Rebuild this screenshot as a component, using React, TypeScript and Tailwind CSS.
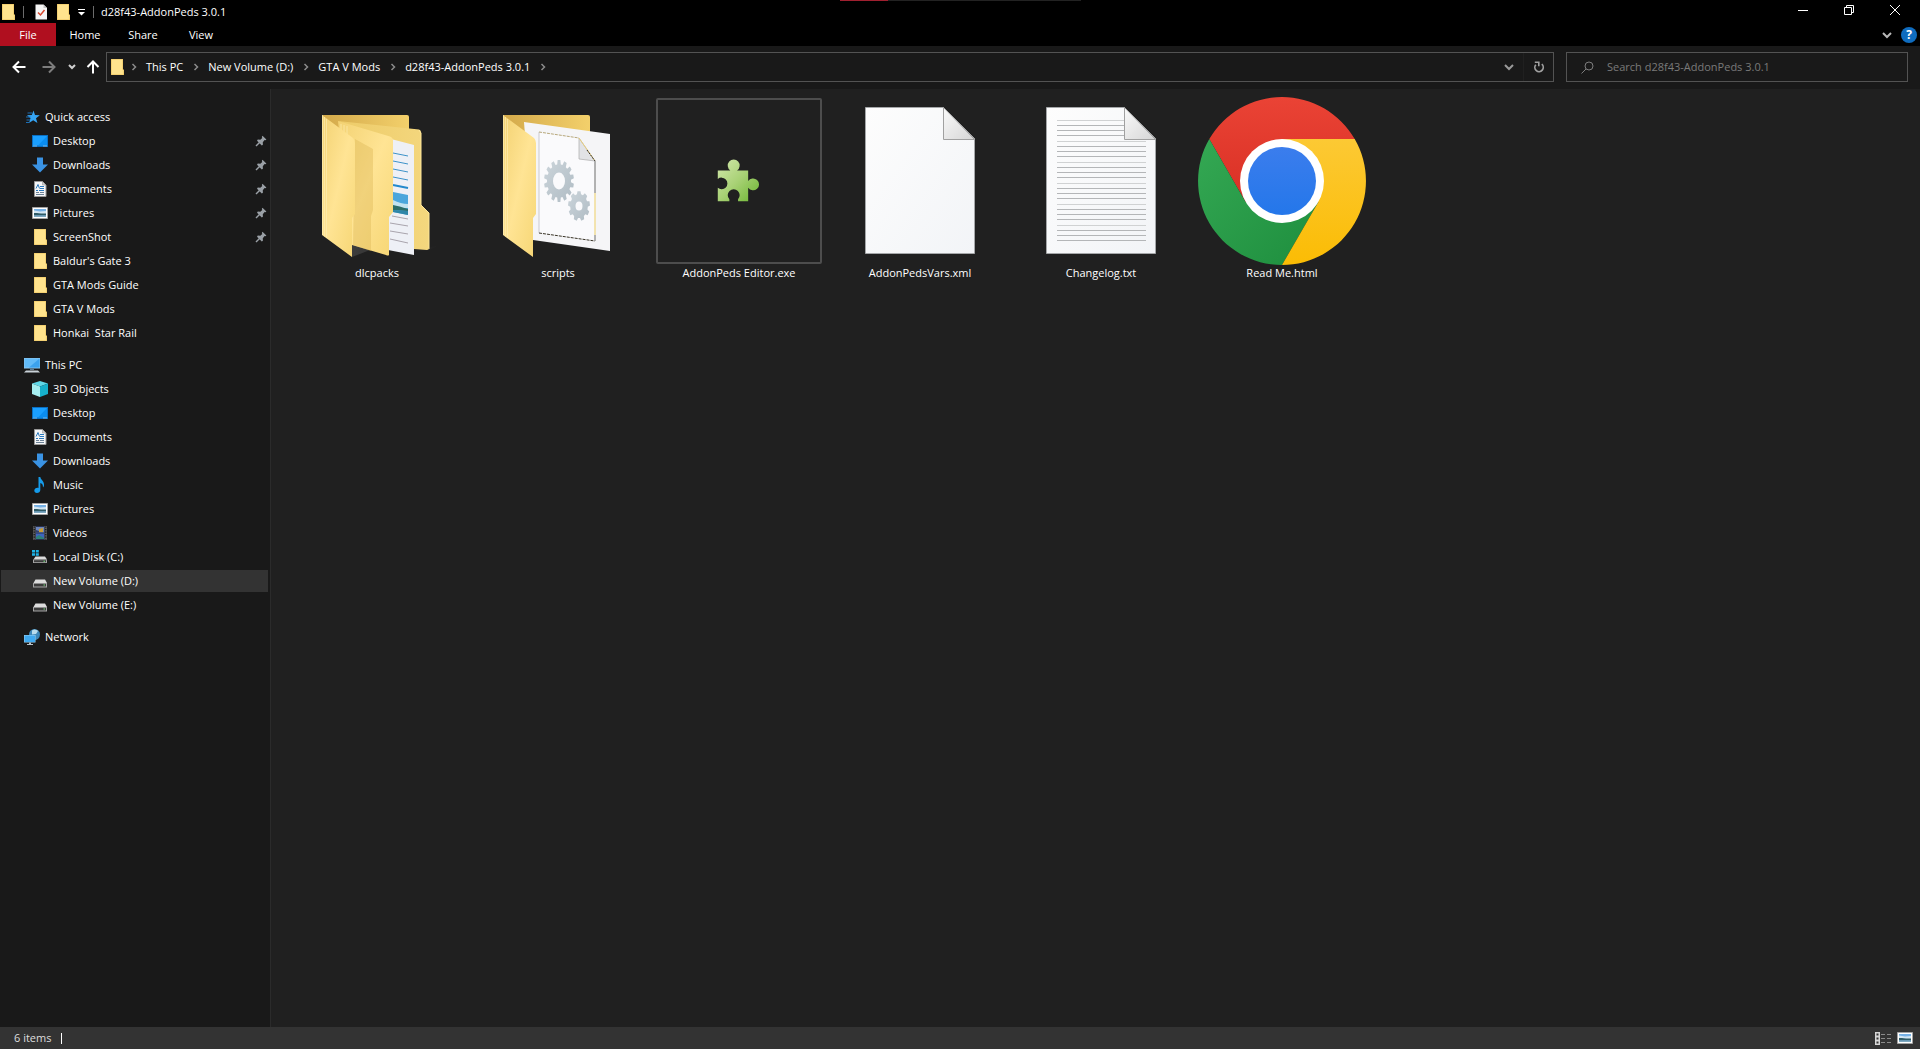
import { useState } from "react"
import type { ReactNode } from "react"
import { clsx } from "clsx"

type IconName =
    | "star" | "desktop" | "downloads" | "documents" | "pictures" | "folder"
    | "pc" | "cube" | "music" | "videos" | "diskC" | "disk" | "network"

interface TreeItem {
    label: string
    icon: IconName
    pinned?: boolean
}

interface TreeGroup {
    root: TreeItem
    items: TreeItem[]
}

const TREE: TreeGroup[] = [
    {
        root: { label: "Quick access", icon: "star" },
        items: [
            { label: "Desktop", icon: "desktop", pinned: true },
            { label: "Downloads", icon: "downloads", pinned: true },
            { label: "Documents", icon: "documents", pinned: true },
            { label: "Pictures", icon: "pictures", pinned: true },
            { label: "ScreenShot", icon: "folder", pinned: true },
            { label: "Baldur's Gate 3", icon: "folder" },
            { label: "GTA Mods Guide", icon: "folder" },
            { label: "GTA V Mods", icon: "folder" },
            { label: "Honkai  Star Rail", icon: "folder" },
        ],
    },
    {
        root: { label: "This PC", icon: "pc" },
        items: [
            { label: "3D Objects", icon: "cube" },
            { label: "Desktop", icon: "desktop" },
            { label: "Documents", icon: "documents" },
            { label: "Downloads", icon: "downloads" },
            { label: "Music", icon: "music" },
            { label: "Pictures", icon: "pictures" },
            { label: "Videos", icon: "videos" },
            { label: "Local Disk (C:)", icon: "diskC" },
            { label: "New Volume (D:)", icon: "disk" },
            { label: "New Volume (E:)", icon: "disk" },
        ],
    },
    { root: { label: "Network", icon: "network" }, items: [] },
]

const CRUMBS = ["This PC", "New Volume (D:)", "GTA V Mods", "d28f43-AddonPeds 3.0.1"]

/* ---------- small icons, 16x16 ---------- */

const SMALL_ICONS: Record<IconName, ReactNode> = {
    star: (
        <>
            <path d="M9.5 1.5L11 6l4.8.3L12 9.2l1.4 4.8-4.2-2.8L5 14l1.500-4.800L3 6.300 7.800 6z" fill="#35a5f5" />
            <path d="M3.5 4H8M2 8h4.5M2.5 11H6M2 13.5h3" stroke="#1c6fb5" strokeWidth="1" />
        </>
    ),
    desktop: (
        <>
            <path d="M0 2h16v12H0z" fill="#0a6fc2" />
            <path d="M1 3h14v9.5H1z" fill="#1a9fff" />
            <path d="M15 3v9.5H6z" fill="#0a8df0" />
            <path d="M1.5 13h1M3.5 13h1M11.5 13h1M13.5 13h1" stroke="#d7efff" strokeWidth="1" />
        </>
    ),
    downloads: <path d="M5 .5h6v7h5l-8 8-8-8h5z" fill="#3a93e4" />,
    documents: (
        <>
            <path d="M2.5.5h8L14 4v11.5H2.5z" fill="#f4f6f8" stroke="#9a9a9a" strokeWidth="1" />
            <path d="M10.5.5V4H14z" fill="#cfcfcf" stroke="#8a8a8a" strokeWidth=".5" />
            <path d="M4 7.5l2-4 1.500 4M4 9.500h2M8 5.500h4M8 7.500h4M7 9.500h5" stroke="#2a79bd" strokeWidth="1" fill="none" />
            <path d="M4 11.5h3M8 11.5h4M4 13.5h8" stroke="#6c8196" strokeWidth="1" />
        </>
    ),
    pictures: (
        <>
            <path d="M.5 2.5h15v11H.5z" fill="#fff" stroke="#a3a3a3" strokeWidth="1" />
            <path d="M2 4h12v8H2z" fill="#76b1e6" />
            <path d="M2 5.500l6 1 6-.5v3H2z" fill="#d3e6f3" />
            <path d="M2 8c3-.5 6 1 12 .5v2H2z" fill="#2f5b66" />
            <path d="M2 10.500h12V12H2z" fill="#7fa9c0" />
        </>
    ),
    folder: (
        <>
            <path d="M2 0h12v10l1 1v5H2z" fill="#e9c05a" />
            <path d="M2.5.5h11v15h-11z" fill="#ffe38d" />
            <path d="M13 10.5l1.5.5v4.5H13z" fill="#fbe08a" />
        </>
    ),
    pc: (
        <>
            <path d="M0 1h16v10.5H0z" fill="#8fc8ee" />
            <path d="M.5 1.5h15v9H.5z" fill="#62bbf8" />
            <path d="M15.5 1.5v9H5z" fill="#3ba2ee" />
            <path d="M6 11.5h4V13H6z" fill="#5d7d94" />
            <path d="M2 13.5h12l2 2H0z" fill="#c9d2d8" />
        </>
    ),
    cube: (
        <>
            <path d="M8 0l8 2.5-8 3-8-3z" fill="#5fd8e8" />
            <path d="M0 2.5l8 3V16l-8-3z" fill="#a5eef0" />
            <path d="M16 2.5l-8 3V16l8-3z" fill="#16b0cb" />
        </>
    ),
    music: <path d="M6.500 0h1.800c.3 3 4.500 4 3.700 9l-1 1.500c0-3-1-4-2.700-4.500V13c0 2-1.600 3-3.300 3S2.300 15 2.300 13.600c0-2 2.200-3.200 4.200-2.600z" fill="#159bea" />,
    videos: (
        <>
            <path d="M1 1h14v14H1z" fill="#5a5a5a" />
            <path d="M3.5 1h9v14h-9z" fill="#26304f" />
            <path d="M4 2h8v5.5H4z" fill="#6d86bd" />
            <path d="M4 8.5h8V14H4z" fill="#3f65c0" />
            <path d="M7 4l4-1v4H7z" fill="#c89d35" />
            <path d="M4 5l3 1v1.500H4z" fill="#34406b" />
            <path d="M4 12l3-2 5 3v1H4z" fill="#2f8177" />
            <path d="M2.2 1.5v13M13.8 1.5v13" stroke="#111" strokeWidth="1.2" strokeDasharray="1.2 1.3" />
        </>
    ),
    diskC: (
        <>
            <path d="M0 1h3v2.5H0zM3.8 1h3v2.5h-3zM0 4.3h3v2.5H0zM3.8 4.3h3v2.5h-3z" fill="#1fb4e8" />
            <path d="M3.5 7.500H13l2 3H1.500z" fill="#dcdcdc" />
            <path d="M1 10.5h14V14H1z" fill="#a5a5a5" />
            <path d="M2 11.2h12v2H2z" fill="#3c3c3c" />
            <path d="M11.5 11.7H13v1h-1.5z" fill="#74e07c" />
        </>
    ),
    disk: (
        <>
            <path d="M3.5 6.5H13l2 3.5H1.500z" fill="#dcdcdc" />
            <path d="M1 10h14v4.5H1z" fill="#a5a5a5" />
            <path d="M2 10.8h12v2.7H2z" fill="#3c3c3c" />
            <path d="M11.5 11.5H13v1h-1.5z" fill="#74e07c" />
        </>
    ),
    network: (
        <>
            <circle cx="10.5" cy="5.5" r="5.5" fill="#3d87b8" />
            <path d="M8 1.5c2-2 5-1 6 .5l-2 3-4 .5z" fill="#b8dcec" />
            <path d="M0 6h11.5v7.5H0z" fill="#9bd2f2" />
            <path d="M.5 6.5H11V13H.5z" fill="#3fa9f0" />
            <path d="M3 15h6v1H3zM5 13.500h2V15H5z" fill="#b7c2ca" />
        </>
    ),
}

function SmallIcon({ name }: { name: IconName }) {
    return (
        <svg viewBox="0 0 16 16" className="size-4 shrink-0" aria-hidden="true">
            {SMALL_ICONS[name]}
        </svg>
    )
}

function Pin() {
    return (
        <svg viewBox="0 0 12 12" className="size-3 shrink-0" aria-hidden="true">
            <path d="M7.5.8l3.900 3.700-1 .8-.8-.2-1.800 2.100.1 2.500-1.100.8L2 5.700l.8-1.100 2.500.2 2-1.800-.5-1z" fill="#9aa0a6" />
            <path d="M4.5 7.5L1 11" stroke="#9aa0a6" strokeWidth="1.4" />
        </svg>
    )
}

function Chevron({ dir, className }: { dir: "right" | "down"; className?: string }) {
    return (
        <svg viewBox="0 0 10 10" className={clsx("size-[10px] shrink-0", className)} aria-hidden="true">
            <path d={dir === "right" ? "M3.5 2l3 3-3 3" : "M1 3l4 4 4-4"} fill="none" stroke="currentColor" strokeWidth={dir === "right" ? 1.5 : 2} />
        </svg>
    )
}

function Arrow({ className }: { className?: string }) {
    return (
        <svg viewBox="0 0 14 14" className={clsx("size-[14px]", className)} aria-hidden="true">
            <path d="M7 1.5L1.5 7 7 12.5M1.5 7h12" fill="none" stroke="currentColor" strokeWidth="2" />
        </svg>
    )
}

/* ---------- large file icons, 168x168 ---------- */

function gearPath(cx: number, cy: number, rx: number, ry: number, teeth: number) {
    const points: string[] = []
    const step = (Math.PI * 2) / teeth
    for (let i = 0; i < teeth; i++) {
        const corners: [number, number][] = [[-0.34, 0.8], [-0.2, 1], [0.2, 1], [0.34, 0.8]]
        corners.forEach(([shift, r]) => {
            const a = (i + shift) * step - Math.PI / 2
            points.push(`${(cx + Math.cos(a) * rx * r).toFixed(2)} ${(cy + Math.sin(a) * ry * r).toFixed(2)}`)
        })
    }
    return `M${points.join("L")}Z`
}

function FolderDefs({ id }: { id: string }) {
    return (
        <defs>
            <linearGradient id={`${id}-flap`} x1="0" y1="0" x2="1" y2="1">
                <stop offset="0" stopColor="#f3d273" />
                <stop offset=".5" stopColor="#ffe494" />
                <stop offset="1" stopColor="#f6d675" />
            </linearGradient>
            <linearGradient id={`${id}-back`} x1="0" y1="0" x2="1" y2="0">
                <stop offset="0" stopColor="#d3a94a" />
                <stop offset="1" stopColor="#f3d06b" />
            </linearGradient>
            <linearGradient id={`${id}-inner`} x1="0" y1="0" x2="1" y2="0">
                <stop offset="0" stopColor="#edcb68" />
                <stop offset="1" stopColor="#f4d77e" />
            </linearGradient>
        </defs>
    )
}

function FolderFlap({ id }: { id: string }) {
    return (
        <>
            <path d="M29 18L60 41Q62 43 62 46V117L59 121V160L29 138Z" fill={`url(#${id}-flap)`} />
            <path d="M29.5 18V138M31.5 20V139.5M33.5 22V141" stroke="#fff0b8" strokeWidth=".6" />
        </>
    )
}

function DlcFolder() {
    return (
        <svg viewBox="0 0 168 168" className="size-full" aria-hidden="true">
            <FolderDefs id="dlc" />
            <linearGradient id="dlc-shade" x1="0" y1="0" x2="1" y2="0">
                <stop offset="0" stopColor="#3c3c3c" />
                <stop offset="1" stopColor="#202020" />
            </linearGradient>
            <path d="M59 160l18-7-18-6zM121 154l26-6-11 5z" fill="url(#dlc-shade)" />
            <path d="M29 18h85q2 0 2 2v40H60z" fill="url(#dlc-back)" />
            <path d="M45 24L126 32.5q2 .5 2 3V108l8 8v35q0 2-2 2l-13-1V60z" fill="url(#dlc-inner)" />
            <path d="M126 33l2 3v72l8 8v36" fill="none" stroke="#ffe79a" strokeWidth="1" />
            <path d="M98 42l23 6v110l-26-5z" fill="#eef0f6" />
            <path d="M100 56l15 3M100 64l15 3M100 72l15 3M100 80l15 3" stroke="#3f93c9" strokeWidth="1" />
            <path d="M100 88l15 3" stroke="#2389cc" strokeWidth="2" />
            <path d="M100 95l15 3v20l-15-3z" fill="#4ba6dc" />
            <path d="M100 103q8 4 15 4v4h-15z" fill="#c2e2ef" />
            <path d="M100 108q6 1 15 4v2l-15-1z" fill="#2c6d68" />
            <path d="M100 113l15 1v4l-15-3z" fill="#2f86a8" />
            <path d="M99 119l16 3M97 126l18 3M97 134l18 3M97 142l18 4" stroke="#a9a4ad" strokeWidth="1" />
            <path d="M45 24L97 39.5q3 1 3 4V115l-4 5v38q-1 1-3 0L59 148z" fill="url(#dlc-flap)" />
            <path d="M62 42l18 10v61l-2 6v35l-18-6z" fill="#dcb654" opacity=".4" />
            <path d="M48 27v8M51 28v10M54 29v12" stroke="#fff0b8" strokeWidth=".6" />
            <FolderFlap id="dlc" />
        </svg>
    )
}

function ScriptsFolder() {
    return (
        <svg viewBox="0 0 168 168" className="size-full" aria-hidden="true">
            <FolderDefs id="scr" />
            <linearGradient id="scr-gear" x1="0" y1="0" x2="1" y2="1">
                <stop offset="0" stopColor="#ccd5db" />
                <stop offset="1" stopColor="#b0bcc4" />
            </linearGradient>
            <path d="M29 18h85q2 0 2 2v40H60z" fill="url(#scr-back)" />
            <path d="M50 25l86 12v117l-77-11z" fill="#f5f5f7" />
            <path d="M65 35l40 6 16 23v80l-56-8z" fill="#fafafc" />
            <path d="M65 35v101" stroke="#c9c9cf" strokeWidth="1" />
            <path d="M65 35l40 6" stroke="#b7a87c" strokeWidth="1" strokeDasharray="3 1" />
            <path d="M65 136l56 8" stroke="#3a3528" strokeWidth="1" strokeDasharray="3 1" />
            <path d="M121 64v32M121 138v6" stroke="#9b9b9b" strokeWidth="1.5" />
            <path d="M121 96v42" stroke="#f1dd97" strokeWidth="1.5" />
            <path d="M105 41v21l16 2z" fill="#e2e3e6" stroke="#aaa" strokeWidth=".7" />
            <path d="M105 41l16 23" stroke="#e9cf7d" strokeWidth="1" />
            <path d="M113 53l8 11" stroke="#333" strokeWidth="1" strokeDasharray="2 1" />
            <path d={gearPath(85, 84, 15, 21, 14)} fill="url(#scr-gear)" />
            <ellipse cx="85" cy="84" rx="6" ry="8.5" fill="#fafafc" />
            <path d={gearPath(105, 109, 11, 15, 9)} fill="url(#scr-gear)" />
            <ellipse cx="105" cy="109" rx="3.5" ry="4.5" fill="#fafafc" />
            <FolderFlap id="scr" />
        </svg>
    )
}

function Puzzle() {
    return (
        <svg viewBox="0 0 168 168" className="size-full" aria-hidden="true">
            <linearGradient id="puzzle" x1="0" y1="0" x2="1" y2="1">
                <stop offset="0" stopColor="#d3e8ac" />
                <stop offset=".5" stopColor="#a8d175" />
                <stop offset="1" stopColor="#6ab52f" />
            </linearGradient>
            <path
                d="M62 73H75A6.2 6.2 0 1 1 82 73H93.5V84A6.2 6.2 0 1 1 93.5 91V105H83V103A6.2 6.2 0 1 0 74 103V105H62V91A6 6 0 1 0 62 82Z"
                fill="url(#puzzle)"
            />
        </svg>
    )
}

function Sheet({ lined = false }: { lined?: boolean }) {
    const id = lined ? "sheet-lined" : "sheet"
    return (
        <svg viewBox="0 0 168 168" className="size-full" aria-hidden="true">
            <linearGradient id={id} x1="0" y1="0" x2="1" y2="1">
                <stop offset="0" stopColor="#fdfdfd" />
                <stop offset="1" stopColor="#f2f4f7" />
            </linearGradient>
            <linearGradient id={`${id}-fold`} x1="0" y1="0" x2="1" y2="1">
                <stop offset="0" stopColor="#fafafa" />
                <stop offset="1" stopColor="#d5d5d5" />
            </linearGradient>
            <path d="M29.5 10.5H107.5L138.5 41.5V156.5H29.5Z" fill={`url(#${id})`} stroke="#a5a7a9" strokeWidth="1" />
            {lined &&
                Array.from({ length: 24 }, (_, i) => (
                    <path
                        key={i}
                        d={`M40 ${Math.floor(23 + i * 5.26) + 0.5}H${i < 4 ? 107 : 129}`}
                        stroke={i % 4 === 0 ? "#d0d2d3" : "#b4b6b8"}
                        strokeWidth="1"
                    />
                ))}
            <path d="M107.5 10.5V42.5H138.5Z" fill={`url(#${id}-fold)`} stroke="#a0a0a0" strokeWidth="1" />
        </svg>
    )
}

function ChromeLogo() {
    return (
        <svg viewBox="0 0 168 168" className="size-full" aria-hidden="true">
            <defs>
                <linearGradient id="c-red" x1="0" y1="0" x2="0" y2="1">
                    <stop offset="0" stopColor="#ea4335" />
                    <stop offset="1" stopColor="#d93025" />
                </linearGradient>
                <linearGradient id="c-green" x1="0" y1="0" x2="1" y2="1">
                    <stop offset="0" stopColor="#34a853" />
                    <stop offset="1" stopColor="#1e8e3e" />
                </linearGradient>
                <linearGradient id="c-yellow" x1="0" y1="0" x2="0" y2="1">
                    <stop offset="0" stopColor="#fcc934" />
                    <stop offset="1" stopColor="#fbbc04" />
                </linearGradient>
                <linearGradient id="c-blue" x1="0" y1="0" x2="0" y2="1">
                    <stop offset="0" stopColor="#3b7ded" />
                    <stop offset="1" stopColor="#2477ea" />
                </linearGradient>
            </defs>
            <path d="M156.7 42A84 84 0 0 0 11.3 42L47.6 105 84 84V42z" fill="url(#c-red)" />
            <path d="M11.3 42A84 84 0 0 0 84 168l36.4-63L84 84 47.6 105z" fill="url(#c-green)" />
            <path d="M156.7 42A84 84 0 0 1 84 168l36.4-63L84 84V42z" fill="url(#c-yellow)" />
            <circle cx="84" cy="84" r="42" fill="#fff" />
            <circle cx="84" cy="84" r="34" fill="url(#c-blue)" />
        </svg>
    )
}

const FILES: { name: string; icon: ReactNode; focused?: boolean }[] = [
    { name: "dlcpacks", icon: <DlcFolder /> },
    { name: "scripts", icon: <ScriptsFolder /> },
    { name: "AddonPeds Editor.exe", icon: <Puzzle />, focused: true },
    { name: "AddonPedsVars.xml", icon: <Sheet /> },
    { name: "Changelog.txt", icon: <Sheet lined /> },
    { name: "Read Me.html", icon: <ChromeLogo /> },
]

/* ---------- window parts ---------- */

function TitleBar() {
    return (
        <header className="flex h-[23px] items-center bg-black">
            <SmallIcon name="folder" />
            <span className="ml-[7px] h-3 w-px bg-[#6b6b6b]" />
            <button aria-label="Properties" className="ml-[9px]">
                <svg viewBox="0 0 16 16" className="size-4" aria-hidden="true">
                    <path d="M2.5.5h8L14 4v11.5H2.5z" fill="#f5f5f5" />
                    <path d="M10.5.5V4H14z" fill="#c4c4c4" />
                    <path d="M5 8.5L7.5 11l4-5" fill="none" stroke="#d8482f" strokeWidth="1.5" />
                </svg>
            </button>
            <button aria-label="New folder" className="ml-[6px]">
                <SmallIcon name="folder" />
            </button>
            <button aria-label="Customize Quick Access Toolbar" className="ml-[7px]">
                <svg viewBox="0 0 7 8" className="h-2 w-[7px]" aria-hidden="true">
                    <path d="M0 1.5h7" stroke="#fff" strokeWidth="1" />
                    <path d="M0 4h7L3.5 7.5z" fill="#fff" />
                </svg>
            </button>
            <span className="ml-[8px] h-3 w-px bg-[#6b6b6b]" />
            <h1 className="ml-[7px] flex-1">d28f43-AddonPeds 3.0.1</h1>
            <div className="flex h-full pb-[3px] pr-[2px]">
                <button aria-label="Minimize" className="flex w-[46px] items-center justify-center">
                    <svg viewBox="0 0 10 10" className="size-[10px]"><path d="M0 5.5h10" stroke="#fff" /></svg>
                </button>
                <button aria-label="Restore" className="flex w-[46px] items-center justify-center">
                    <svg viewBox="0 0 10 10" className="size-[10px]">
                        <path d="M.5 2.5h7v7h-7zM2.5 2.5v-2h7v7h-2" fill="none" stroke="#fff" />
                    </svg>
                </button>
                <button aria-label="Close" className="flex w-[46px] items-center justify-center">
                    <svg viewBox="0 0 10 10" className="size-[10px]"><path d="M0 0l10 10M10 0L0 10" stroke="#fff" /></svg>
                </button>
            </div>
        </header>
    )
}

function RibbonTabs() {
    return (
        <div className="flex h-[23px] items-stretch bg-black">
            <button className="w-14 bg-[#b00f1f]">File</button>
            {["Home", "Share", "View"].map((tab) => (
                <button key={tab} className="w-[58px]">{tab}</button>
            ))}
            <div className="ml-auto flex items-center gap-[9px] pr-[3px]">
                <button aria-label="Expand the Ribbon" className="text-[#b8b8b8]">
                    <Chevron dir="down" />
                </button>
                <button aria-label="Help" className="flex size-4 items-center justify-center rounded-full bg-[#0f6cbf] text-xs font-bold leading-none text-white">
                    ?
                </button>
            </div>
        </div>
    )
}

function AddressBar() {
    return (
        <div className="flex h-[43px] items-center px-3 pb-px">
            <nav aria-label="Navigation" className="flex items-center">
                <button aria-label="Back"><Arrow /></button>
                <button aria-label="Forward" className="ml-4 text-[#7d7d7d]"><Arrow className="rotate-180" /></button>
                <button aria-label="Recent locations" className="ml-3 text-[#d0d0d0]">
                    <svg viewBox="0 0 8 8" className="size-2" aria-hidden="true">
                        <path d="M1 2l3 3 3-3" fill="none" stroke="currentColor" strokeWidth="2" />
                    </svg>
                </button>
                <button aria-label="Up" className="ml-[10px]"><Arrow className="rotate-90" /></button>
            </nav>
            <div className="ml-[6px] flex h-[30px] flex-1 items-center border border-[#535353] pl-[2px]">
                <SmallIcon name="folder" />
                <ol className="flex flex-1 items-center gap-1 pl-1">
                    {CRUMBS.map((crumb) => (
                        <li key={crumb} className="flex items-center gap-[7px] pr-1">
                            <Chevron dir="right" className="text-[#8a8a8a]" />
                            <a href="#">{crumb}</a>
                        </li>
                    ))}
                    <li><Chevron dir="right" className="text-[#8a8a8a]" /></li>
                </ol>
                <button aria-label="Previous locations" className="flex h-full w-7 items-center justify-center text-[#9a9a9a]">
                    <Chevron dir="down" />
                </button>
                <button aria-label="Refresh" className="flex h-full w-[30px] items-center justify-center border-l border-[#202020] text-[#a0a0a0]">
                    <svg viewBox="0 0 12 12" className="size-3" aria-hidden="true">
                        <path d="M8.8 3.2A4.2 4.2 0 1 1 2.8 3.7" fill="none" stroke="currentColor" strokeWidth="1.7" />
                        <path d="M1.8 1.2h4v4" fill="none" stroke="currentColor" strokeWidth="1.6" />
                    </svg>
                </button>
            </div>
            <label className="ml-3 flex h-[30px] w-[342px] items-center gap-[13px] border border-[#535353] pl-[14px]">
                <svg viewBox="0 0 13 13" className="size-[13px] shrink-0 text-[#7d7d7d]" aria-hidden="true">
                    <circle cx="8" cy="5" r="4" fill="none" stroke="currentColor" />
                    <path d="M5 8L.5 12.5" stroke="currentColor" />
                </svg>
                <input
                    type="text"
                    aria-label="Search"
                    placeholder="Search d28f43-AddonPeds 3.0.1"
                    className="min-w-0 flex-1 bg-transparent outline-none placeholder:text-[#7a7a7a]"
                />
            </label>
        </div>
    )
}

function TreeRow({ item, root, active, onSelect }: { item: TreeItem; root?: boolean; active: boolean; onSelect: () => void }) {
    return (
        <button
            onClick={onSelect}
            className={clsx(
                "my-px flex h-[22px] items-center gap-[5px] whitespace-pre pr-px text-left",
                root ? "pl-[23px]" : "pl-[31px]",
                active && "bg-[#333333]"
            )}
        >
            <SmallIcon name={item.icon} />
            <span className="flex-1">{item.label}</span>
            {item.pinned && <Pin />}
        </button>
    )
}

function Sidebar() {
    const [selected, setSelected] = useState("New Volume (D:)")
    return (
        <aside className="flex w-[271px] shrink-0 flex-col gap-2 border-r border-[#2b2b2b] pl-px pr-[2px] pt-4">
            {TREE.map(({ root, items }) => (
                <div key={root.label} className="flex flex-col">
                    <TreeRow item={root} root active={selected === root.label} onSelect={() => setSelected(root.label)} />
                    {items.map((item) => (
                        <TreeRow
                            key={item.label}
                            item={item}
                            active={selected === item.label}
                            onSelect={() => setSelected(item.label)}
                        />
                    ))}
                </div>
            ))}
        </aside>
    )
}

function FileGrid() {
    return (
        <main className="flex flex-1 flex-wrap content-start gap-[13px] bg-[#202020] pl-[22px] pt-2">
            {FILES.map((file) => (
                <button key={file.name} className="flex w-[168px] flex-col items-center">
                    <span className={clsx("block size-[168px]", file.focused && "p-px")}>
                        <span className={clsx("block size-full", file.focused && "rounded-xs border-2 border-[#4d4d4d]")}>
                            {file.icon}
                        </span>
                    </span>
                    <span>{file.name}</span>
                </button>
            ))}
        </main>
    )
}

function StatusBar() {
    return (
        <footer className="flex h-[22px] items-center bg-[#333333] pl-[14px] pr-[7px] text-[#dedede]">
            <span>6 items</span>
            <span className="ml-[10px] h-[11px] w-px bg-white" />
            <div className="ml-auto flex items-center gap-[6px]">
                <button aria-label="Details view">
                    <svg viewBox="0 0 16 13" className="h-[13px] w-4" aria-hidden="true">
                        <path d="M0 0h5v13H0z" fill="#d6d6d6" />
                        <path d="M1.5 1.5h2v2h-2zM1.5 5.5h2v2h-2zM1.5 9.5h2v2h-2z" fill="#333" />
                        <path d="M6 2.5h4M12 2.5h4M6 6.5h4M12 6.5h4M6 10.5h4M12 10.5h4" stroke="#8a8a8a" />
                    </svg>
                </button>
                <button aria-label="Large thumbnails">
                    <SmallIcon name="pictures" />
                </button>
            </div>
        </footer>
    )
}

export default function App() {
    return (
        <div className="relative flex min-h-screen flex-col bg-[#191919] font-['Open_Sans','Segoe_UI',sans-serif] text-[11px] leading-4 text-white">
            {/* progress strip along the window's top edge */}
            <div className="absolute left-[840px] top-0 h-px w-[241px] bg-[#222222]">
                <div className="h-px w-12 bg-[#a02030]" />
            </div>
            <TitleBar />
            <RibbonTabs />
            <AddressBar />
            <div className="flex flex-1">
                <Sidebar />
                <FileGrid />
            </div>
            <StatusBar />
        </div>
    )
}
